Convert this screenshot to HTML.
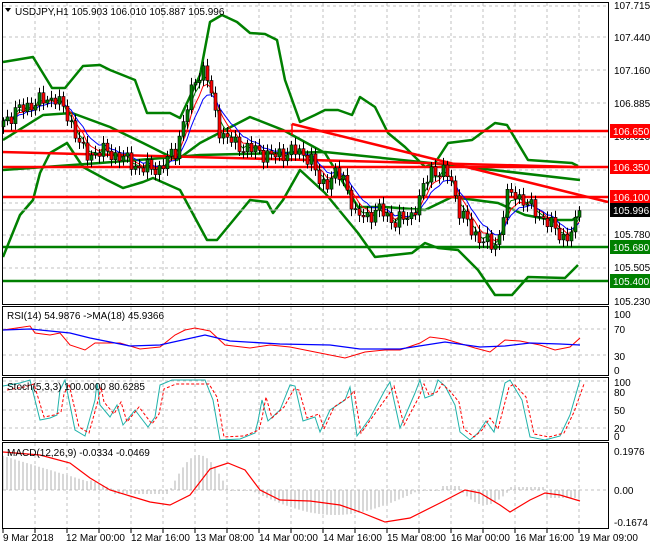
<!DOCTYPE html>
<html><head><meta charset="utf-8"><style>
body{margin:0;background:#fff;width:650px;height:550px;overflow:hidden}
svg{display:block;font-family:"Liberation Sans",sans-serif;font-size:10px}
</style></head><body>
<svg id="s" width="650" height="550" xmlns="http://www.w3.org/2000/svg">
<rect width="650" height="550" fill="#fff"/>
<g id="grid" stroke="#c0c0c0" stroke-dasharray="3,3" stroke-width="1"></g>
<!-- main lines -->
<g fill="none" stroke="#008000" stroke-width="2.5" stroke-linejoin="round">
<polyline points="3,62 33,57 52,88 65,88 83,66 100,65 110,70 135,80 147,113 170,113 180,118 200,75 210,22 222,15 237,22 250,33 265,34 277,40 285,80 300,122 315,115 325,110 338,110 352,115 360,97 375,107 388,133 405,147 425,167 435,163 448,143 472,140 495,123 507,125 528,160 572,163 578,166"/>
<polyline points="3,257 20,215 33,200 40,173 50,153 67,143 83,167 107,180 123,188 143,182 153,178 180,190 207,240 217,240 250,200 267,202 273,213 283,200 300,170 325,193 358,233 375,257 412,253 425,243 438,248 458,250 478,270 495,295 512,295 528,277 565,278 578,265"/>
<polyline points="3,140 43,115 72,113 110,127 143,143 177,160 200,143 250,117 283,130 325,153 358,207 385,207 425,210 452,197 475,200 498,203 525,215 552,220 572,220 578,217"/>
<polyline points="3,170 100,163 200,155 325,152 450,165 580,180"/>
</g>
<line x1="2" y1="210" x2="608" y2="210" stroke="#c0c0c0"/>
<g stroke="#ff0000" stroke-width="2.5">
<line x1="2" y1="131" x2="608" y2="131"/>
<line x1="2" y1="167" x2="608" y2="167"/>
<line x1="2" y1="197" x2="608" y2="197"/>
<line x1="2" y1="152" x2="578" y2="167"/>
<line x1="292" y1="124" x2="608" y2="202"/>
<line x1="292" y1="124" x2="292" y2="135" stroke-width="1.5"/>
</g>
<g stroke="#008000" stroke-width="2.5">
<line x1="2" y1="247" x2="608" y2="247"/>
<line x1="2" y1="281" x2="608" y2="281"/>
</g>
<g id="ma"></g>
<g id="candles"></g>
<!-- RSI -->
<polyline fill="none" stroke="#ff0000" points="3,330 30,326 35,333 50,335 60,333 70,345 85,350 95,343 120,343 140,349 160,347 175,335 185,330 195,328 210,331 225,345 250,348 270,345 290,347 320,353 345,358 365,352 385,350 400,350 420,343 430,337 445,339 475,348 490,352 505,340 520,341 540,345 555,350 570,347 580,338"/>
<polyline fill="none" stroke="#0000ff" stroke-width="1.3" points="3,330 30,329 70,333 90,338 130,346 160,345 205,335 230,341 280,344 330,345 360,349 400,349 445,342 480,347 505,346 530,343 560,344 580,345"/>
<!-- Stoch -->
<polyline id="stc" fill="none" stroke="#20b2aa" points="3,386 20,383 30,380 40,420 50,418 57,415 60,390 65,380 75,430 85,436 95,400 97,383 100,405 110,417 117,405 123,425 135,410 148,427 155,417 160,385 172,380 185,380 205,380 213,400 220,440 240,439 255,433 258,421 262,400 268,421 280,410 290,385 295,386 303,421 315,417 320,432 330,410 345,400 350,387 357,436 370,418 385,390 390,382 400,428 415,393 420,380 425,398 433,395 438,380 445,386 455,405 460,432 470,440 478,433 486,421 494,432 505,383 510,380 522,400 530,437 545,440 560,436 570,415 580,380"/>
<polyline id="std" fill="none" stroke="#ff0000" stroke-dasharray="3,2"/>
<g id="hist" stroke="#b0b0b0"></g>
<polyline fill="none" stroke="#ff0000" stroke-width="1.2" points="3,452 40,455 70,463 90,478 110,490 130,496 150,502 170,505 190,495 210,469 228,463 245,470 260,490 280,500 310,501 340,505 360,512 385,522 410,518 440,503 465,490 480,493 500,505 510,512 530,500 545,493 560,495 580,501"/>
<!-- frames -->
<g fill="none" stroke="#000">
<rect x="2.5" y="2.5" width="606" height="302"/>
<rect x="2.5" y="306.5" width="606" height="69"/>
<rect x="2.5" y="377.5" width="606" height="63"/>
<rect x="2.5" y="442.5" width="606" height="86"/>
</g>
<g id="ticks" stroke="#000"></g>
<g fill="#000">
<path d="M5,8 L11,8 L8,12 Z"/>
<text x="15" y="15">USDJPY,H1  105.903 106.010 105.887 105.996</text>
<text x="7" y="319">RSI(14) 54.9876  -&gt;MA(18) 45.9366</text>
<text x="7" y="390">Stoch(5,3,3) 100.0000 80.6285</text>
<text x="7" y="456">MACD(12,26,9) -0.0334 -0.0469</text>
<text x="614" y="9">107.715</text>
<text x="614" y="41">107.440</text>
<text x="614" y="74">107.160</text>
<text x="614" y="107">106.885</text>
<text x="614" y="140">106.610</text>
<text x="614" y="238">105.780</text>
<text x="614" y="271">105.505</text>
<text x="614" y="305">105.230</text>
<text x="614" y="318">100</text><text x="614" y="333">70</text><text x="614" y="360">30</text><text x="614" y="374">0</text>
<text x="614" y="386">100</text><text x="614" y="396">80</text><text x="614" y="414">50</text><text x="614" y="432">20</text><text x="614" y="440">0</text>
<text x="614" y="455">0.1976</text><text x="614" y="494">0.00</text><text x="614" y="526">-0.1674</text>
<text x="3" y="541">9 Mar 2018</text><text x="66" y="541">12 Mar 00:00</text><text x="131" y="541">12 Mar 16:00</text><text x="195" y="541">13 Mar 08:00</text><text x="259" y="541">14 Mar 00:00</text><text x="323" y="541">14 Mar 16:00</text><text x="387" y="541">15 Mar 08:00</text><text x="451" y="541">16 Mar 00:00</text><text x="515" y="541">16 Mar 16:00</text><text x="579" y="541">19 Mar 09:00</text>
</g>
<g>
<rect x="610" y="124" width="40" height="14" fill="#ff0000"/><text x="613" y="135" fill="#fff">106.650</text>
<rect x="610" y="160" width="40" height="14" fill="#ff0000"/><text x="613" y="171" fill="#fff">106.350</text>
<rect x="610" y="190" width="40" height="14" fill="#ff0000"/><text x="613" y="201" fill="#fff">106.100</text>
<rect x="610" y="203" width="40" height="14" fill="#000"/><text x="613" y="214" fill="#fff">105.996</text>
<rect x="610" y="240" width="40" height="14" fill="#008000"/><text x="613" y="251" fill="#fff">105.680</text>
<rect x="610" y="274" width="40" height="14" fill="#008000"/><text x="613" y="285" fill="#fff">105.400</text>
</g>
</svg>
<script>
var NS="http://www.w3.org/2000/svg";
function el(p,t,a){var e=document.createElementNS(NS,t);for(var k in a)e.setAttribute(k,a[k]);document.getElementById(p).appendChild(e);return e;}
var vx=[35,67,99,131,163,195,227,259,291,323,355,387,419,451,483,515,547,579];
[[3,304],[307,375],[378,440],[443,528]].forEach(function(r){vx.forEach(function(x){el("grid","line",{x1:x,y1:r[0],x2:x,y2:r[1]});});});
[6,37,70,103,137,170,203,235,268].forEach(function(y){el("grid","line",{x1:3,y1:y,x2:608,y2:y});});
[329,355,381,392,410,428,490].forEach(function(y){el("grid","line",{x1:3,y1:y,x2:608,y2:y});});
vx.concat([3]).forEach(function(x){el("ticks","line",{x1:x,y1:529,x2:x,y2:533});});
var kp=[[3,106.75],[20,106.85],[35,106.9],[55,106.95],[70,106.75],[85,106.45],[100,106.5],[120,106.45],[140,106.35],[160,106.35],[175,106.5],[185,106.8],[195,107.1],[205,107.2],[212,106.9],[220,106.65],[235,106.55],[255,106.5],[275,106.45],[290,106.5],[310,106.45],[320,106.2],[335,106.3],[345,106.25],[355,105.95],[365,105.95],[380,106.0],[395,105.9],[410,105.95],[420,106.1],[430,106.35],[440,106.3],[450,106.3],[458,106.0],[470,105.85],[480,105.75],[493,105.7],[500,105.8],[505,106.1],[515,106.15],[525,106.05],[535,106.0],[545,105.9],[555,105.85],[565,105.75],[572,105.8],[579,106.0]];
function interp(x){for(var i=1;i<kp.length;i++){if(x<=kp[i][0]){var a=kp[i-1],b=kp[i];return a[1]+(b[1]-a[1])*(x-a[0])/(b[0]-a[0]);}}return kp[kp.length-1][1];}
function Y(p){return 6+(107.715-p)*119;}
var prev=106.7,cl=[],xs=[];
for(var i=0;i<=144;i++){var x=3+4*i;var c=interp(x)+0.05*Math.sin(i*2.3)+0.03*Math.sin(i*5.1);if(i==144)c=105.996;
var o=prev;var h=Math.max(o,c)+0.03+0.03*Math.abs(Math.sin(i*1.7));var l=Math.min(o,c)-0.03-0.03*Math.abs(Math.cos(i*1.3));
el("candles","line",{x1:x+0.5,y1:Y(h),x2:x+0.5,y2:Y(l),stroke:"#000"});
var t=Math.min(Y(o),Y(c)),bh=Math.max(1,Math.abs(Y(o)-Y(c)));
el("candles","rect",{x:x-1,y:t,width:3,height:bh,fill:c>=o?"#008000":"#ff0000",stroke:"#000","stroke-width":0.6});
prev=c;cl.push(c);xs.push(x);}
function ema(n,col){var k=2/(n+1),e=cl[0],pts=[];for(var i=0;i<cl.length;i++){e=cl[i]*k+e*(1-k);pts.push(xs[i]+","+Y(e).toFixed(1));}el("ma","polyline",{points:pts.join(" "),fill:"none",stroke:col,"stroke-width":1});}
ema(5,"#ff0000");ema(8,"#0000ff");ema(3,"#008000");
var sp=document.getElementById("stc").getAttribute("points").split(" ").map(function(p){var a=p.split(",");return (+a[0]+4)+","+(+a[1]+ (a[1]<395?4:-3));});
document.getElementById("std").setAttribute("points",sp.join(" "));
for(var i=0;i<=144;i++){var x=3+4*i;var v;
if(x<90)v=-35+x*0.3;else if(x<115)v=(x-115)*0.4;else if(x<170)v=4;else if(x<228)v=-35*Math.sin((x-170)/58*Math.PI);else if(x<250)v=0;else if(x<420)v=25*Math.sin((x-250)/170*Math.PI);else if(x<440)v=0;else if(x<460)v=-4;else if(x<510)v=15*Math.sin((x-460)/50*Math.PI);else if(x<545)v=-3;else v=8;
if(Math.abs(v)<1)v=v<0?-1:1;el("hist","line",{x1:x,y1:490,x2:x,y2:490+v});}
</script>
</body></html>
